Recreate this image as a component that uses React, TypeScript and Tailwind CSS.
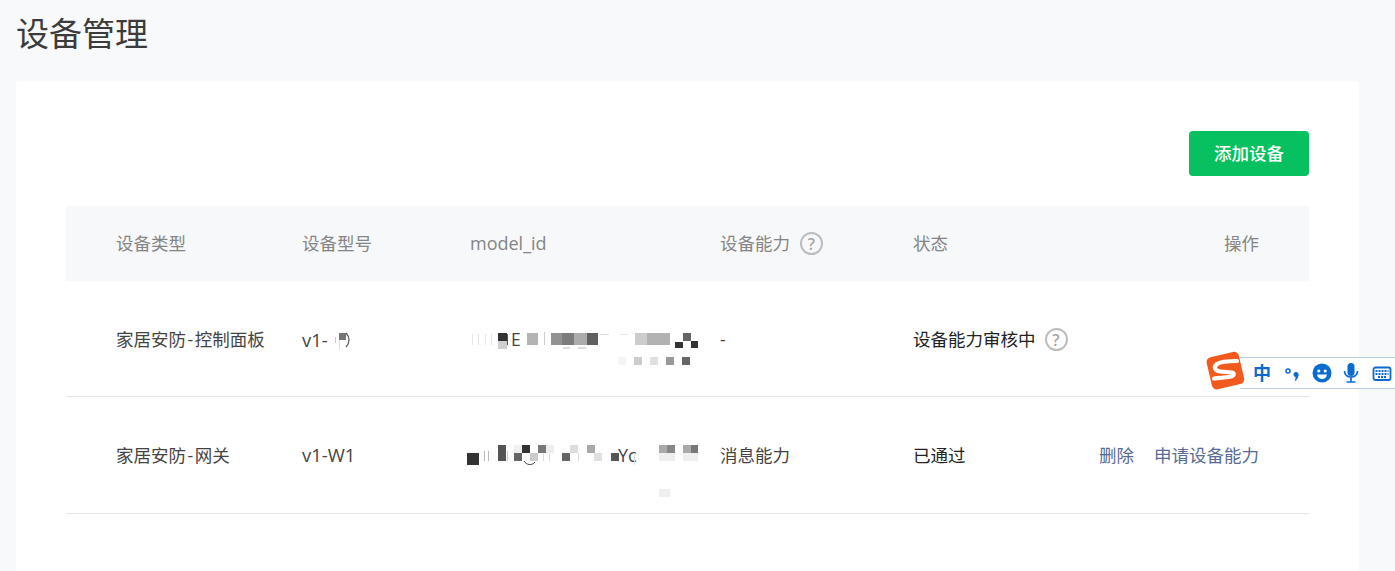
const font = "font-['Open_Sans','Noto_Sans_CJK_SC',sans-serif]";
const cols = "grid grid-cols-[186px_168px_250px_193px_1fr_auto] items-center px-[50px]";

// pixelated blocks of the masked model_id values: x, y, w, h, colour
const mosaic: [number, number, number, number, string][] = [
  [498, 333, 9, 8, "#333333"],
  [498, 341, 9, 8, "#cfcfcf"],
  [527, 333, 11, 12, "#b4b4b4"],
  [551, 333, 11, 12, "#929292"],
  [562, 333, 12, 12, "#7c7c7c"],
  [574, 333, 13, 12, "#acacac"],
  [587, 333, 11, 12, "#606060"],
  [563, 347, 7, 2, "#dddddd"],
  [578, 347, 8, 2, "#dddddd"],
  [635, 333, 12, 12, "#cccccc"],
  [647, 333, 11, 12, "#b2b2b2"],
  [658, 333, 12, 12, "#b2b2b2"],
  [683, 333, 8, 8, "#666666"],
  [675, 342, 8, 6, "#333333"],
  [691, 341, 7, 7, "#333333"],
  [618, 357, 8, 8, "#f5f5f5"],
  [634, 357, 8, 8, "#cccccc"],
  [650, 357, 8, 8, "#e0e0e0"],
  [666, 357, 8, 8, "#999999"],
  [682, 357, 8, 8, "#666666"],
  [467, 453, 12, 12, "#333333"],
  [498, 445, 8, 8, "#555555"],
  [498, 453, 8, 8, "#555555"],
  [514, 445, 8, 8, "#f0f0f0"],
  [522, 445, 8, 8, "#333333"],
  [514, 453, 8, 8, "#666666"],
  [530, 453, 8, 8, "#cccccc"],
  [538, 445, 8, 8, "#777777"],
  [546, 445, 8, 8, "#eeeeee"],
  [562, 453, 8, 8, "#666666"],
  [570, 445, 8, 8, "#dddddd"],
  [587, 445, 8, 8, "#aaaaaa"],
  [594, 453, 8, 8, "#e0e0e0"],
  [611, 453, 8, 8, "#555555"],
  [659, 445, 8, 8, "#aaaaaa"],
  [667, 445, 8, 8, "#888888"],
  [659, 453, 16, 8, "#eeeeee"],
  [683, 445, 8, 8, "#aaaaaa"],
  [691, 445, 7, 8, "#777777"],
  [683, 453, 15, 8, "#eeeeee"],
  [659, 489, 11, 8, "#eeeeee"],
  [339, 333, 7, 7, "#777777"],
  // thin remains of the letters around the blocks
  [472, 334, 1, 11, "#e6e6e6"],
  [478, 334, 1, 11, "#e6e6e6"],
  [485, 334, 1, 11, "#e6e6e6"],
  [491, 334, 1, 11, "#e6e6e6"],
  [507, 334, 1, 11, "#555555"],
  [544, 332, 1, 13, "#cccccc"],
  [600, 334, 9, 1, "#dddddd"],
  [620, 334, 8, 1, "#e6e6e6"],
  [335, 337, 1, 6, "#cccccc"],
  [339, 340, 1, 10, "#dddddd"],
  [484, 451, 1, 10, "#bbbbbb"],
  [488, 451, 1, 10, "#bbbbbb"],
  [507, 451, 1, 10, "#cccccc"],
  [543, 453, 1, 8, "#dddddd"],
  [549, 453, 1, 8, "#dddddd"],
  [578, 453, 1, 8, "#dddddd"],
  [634, 453, 1, 12, "#dddddd"],
];

function Help() {
  return (
    <span className="inline-flex h-[23px] w-[23px] items-center justify-center rounded-full border-2 border-[#bdbdbd] text-[16px] font-semibold leading-none text-[#a6a6a6]">
      ?
    </span>
  );
}

function ImeBar() {
  return (
    <div className="absolute left-[1206px] top-[351px] flex h-[40px] w-[189px] items-center">
      <div className="absolute left-[34px] right-0 top-[6px] h-[32px] border-y border-[#b9d0e8] bg-white" />
      <svg viewBox="0 0 40 40" className="relative h-[40px] w-[40px] shrink-0">
        <rect x="3" y="3" width="33" height="33" rx="5" fill="#f2591c" transform="rotate(-13 20 20)" />
        <path
          d="M31 10 C24 10 15 10 11 13 C7 16 9 20 14 20.5 L26 21.5 C29 22 28 25 25 25.5 C20 26.5 13 27 8 27.500"
          fill="none"
          stroke="#ffffff"
          strokeWidth="4.2"
          strokeLinecap="round"
        />
      </svg>
      <div className="relative ml-[7px] mt-[4px] flex items-center text-[#0a6bd0]">
        <span className="w-[19px] text-[18px] font-bold leading-none">中</span>
        <svg viewBox="0 0 20 20" className="ml-[11px] h-[20px] w-[20px]">
          <circle cx="5" cy="8" r="2" fill="none" stroke="currentColor" strokeWidth="1.500" />
          <circle cx="13" cy="11.500" r="2.500" fill="currentColor" />
          <path d="M15.500 11.500 c0 3 -1.500 5.500 -4 7 c1 -2 1.200 -3.500 1 -5 z" fill="currentColor" />
        </svg>
        <svg viewBox="0 0 20 20" className="ml-[9px] h-[20px] w-[20px]">
          <circle cx="10" cy="10" r="9.500" fill="currentColor" />
          <circle cx="6.800" cy="8" r="1.600" fill="#ffffff" />
          <circle cx="13.200" cy="8" r="1.600" fill="#ffffff" />
          <path d="M5 11.500 h10 c-.5 3 -2.500 4.500 -5 4.500 s-4.500 -1.500 -5 -4.500 z" fill="#ffffff" />
        </svg>
        <svg viewBox="0 0 20 20" className="ml-[9px] h-[20px] w-[20px]">
          <rect x="6.500" y="0" width="7" height="13" rx="3.500" fill="currentColor" />
          <path d="M3.500 8 c0 8 13 8 13 0 M10 14 v4.500 M5.500 19 h9" fill="none" stroke="currentColor" strokeWidth="1.700" />
        </svg>
        <svg viewBox="0 0 20 20" className="ml-[11px] h-[20px] w-[20px]">
          <rect x="1.500" y="4.500" width="17" height="12.500" rx="2" fill="none" stroke="currentColor" strokeWidth="1.800" />
          <path d="M3.500 8 h13 M3.500 11 h13 M6 14 h8" stroke="currentColor" strokeWidth="2" strokeDasharray="2 1" />
        </svg>
      </div>
    </div>
  );
}

export default function App() {
  return (
    <div className={`relative h-[571px] overflow-hidden bg-[#f8f9fb] pl-4 pr-9 ${font}`}>
      <h1 className="pt-[11px] text-[33px] leading-[46px] font-normal text-[#3c3c3c]">设备管理</h1>
      <div className="mt-6 h-[600px] rounded bg-white p-[50px]">
        <div className="flex justify-end">
          <button className="h-[45px] w-[120px] rounded bg-[#07c160] text-[17.5px] font-medium text-white">添加设备</button>
        </div>
        <div className={`${cols} mt-[30px] h-[75px] bg-[#f7f8fa] text-[17.5px] text-[#858585]`}>
          <span>设备类型</span>
          <span>设备型号</span>
          <span className="text-[18px]">model_id</span>
          <span className="flex items-center gap-[10px]">设备能力 <Help /></span>
          <span>状态</span>
          <span>操作</span>
        </div>
        <div className={`${cols} h-[116px] border-b border-[#e6e6e6] pt-[2px] text-[17.5px] text-[#444444]`}>
          <span>家居安防<span className="mx-[1.5px]">-</span>控制面板</span>
          <span className="text-[18.5px]">v1-</span>
          <span className="pl-[41px] text-[#444444]">E</span>
          <span>-</span>
          <span className="flex items-center gap-[9px] text-[#222222]">设备能力审核中 <Help /></span>
          <span />
        </div>
        <div className={`${cols} h-[117px] border-b border-[#e6e6e6] text-[17.5px] text-[#444444]`}>
          <span>家居安防<span className="mx-[1.5px]">-</span>网关</span>
          <span className="text-[18.5px]">v1-W1</span>
          <span className="pl-[148px] text-[18px]">Yc</span>
          <span>消息能力</span>
          <span className="text-[#222222]">已通过</span>
          <span className="flex gap-[20px] text-[#576b95]">
            <span>删除</span>
            <span>申请设备能力</span>
          </span>
        </div>
      </div>
      <div className="absolute left-0 top-0">
        {mosaic.map(([x, y, w, h, c], i) => (
          <div key={i} className="absolute" style={{ left: x, top: y, width: w, height: h, background: c }} />
        ))}
        <svg viewBox="0 0 14 6" className="absolute left-[523px] top-[460px] h-[6px] w-[14px]">
          <path d="M1 1 C3 5 9 6 12 2" fill="none" stroke="#444444" strokeWidth="1" />
        </svg>
        <svg viewBox="0 0 6 16" className="absolute left-[345px] top-[332px] h-[16px] w-[6px]">
          <path d="M1 1 C5 5 5 11 1 15" fill="none" stroke="#555555" strokeWidth="1.200" />
        </svg>
      </div>
      <ImeBar />
    </div>
  );
}
